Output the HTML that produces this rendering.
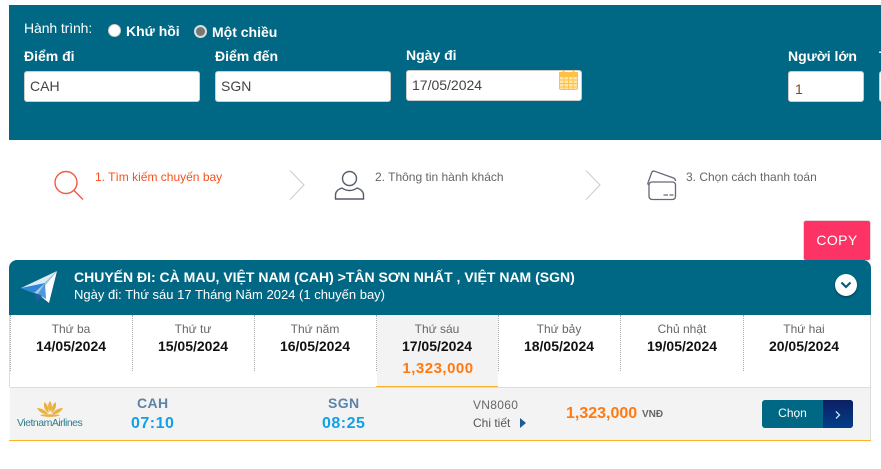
<!DOCTYPE html>
<html lang="vi"><head><meta charset="utf-8"><title>Chuyến bay</title>
<style>
html,body{margin:0;padding:0;background:#fff}
body{position:relative;width:881px;height:469px;overflow:hidden;font-family:"Liberation Sans",Arial,sans-serif;font-size:14px;color:#333}
.a{position:absolute;white-space:nowrap;line-height:16px}
.b{font-weight:bold}
.w{color:#fff}
.lbl{font-weight:bold;color:#fff;font-size:14px}
.inp{position:absolute;background:#fff;border:1px solid #ccc;border-radius:3px;box-sizing:border-box;height:31px;font-size:14px;line-height:29px;padding-left:5px;color:#444}
.sep{position:absolute;top:315px;height:56px;border-left:1px dotted #aaa}
.day{position:absolute;width:122px;text-align:center;line-height:16px;white-space:nowrap}
.d1{top:321px;font-size:12px;color:#666}
.d2{top:338px;font-size:14px;font-weight:bold;color:#111}
.st{position:absolute;font-size:12px;line-height:14px;white-space:nowrap;color:#666}
</style></head><body>
<div class="a" style="left:9px;top:5px;width:872px;height:135px;background:#006884"></div>
<div class="a w" style="left:24px;top:20px;font-size:14px;letter-spacing:-.1px">Hành trình:</div>
<div class="a" style="left:108px;top:24px;width:13px;height:13px;border-radius:50%;background:#fff;border:1px solid #ccc;box-sizing:border-box"></div>
<div class="a lbl" style="left:126px;top:23px">Khứ hồi</div>
<div class="a" style="left:194px;top:25px;width:13px;height:13px;border-radius:50%;background:#777;border:2px solid #ddd;box-sizing:border-box"></div>
<div class="a lbl" style="left:212px;top:24px">Một chiều</div>
<div class="a lbl" style="left:24px;top:48px">Điểm đi</div>
<div class="a lbl" style="left:215px;top:48px">Điểm đến</div>
<div class="a lbl" style="left:406px;top:47px">Ngày đi</div>
<div class="a lbl" style="left:788px;top:48px">Người lớn</div>
<div class="inp" style="left:24px;top:71px;width:176px">CAH</div>
<div class="inp" style="left:215px;top:71px;width:176px">SGN</div>
<div class="inp" style="left:406px;top:70px;width:176px">17/05/2024</div>
<svg class="a" style="left:558px;top:69px" width="21" height="22" viewBox="0 0 21 22">
<rect x="1.500" y="3.500" width="18" height="17" rx="1.500" fill="#ffe6ad" stroke="#fdc048" stroke-width="1"/>
<rect x="1" y="3" width="19" height="5" fill="#fdc048"/>
<path d="M1.500 11h18M1.500 14.500h18M1.500 18h18M6 8v13M10.500 8v13M15 8v13" stroke="#fdc048" stroke-width="1"/>
<path d="M5.500 1v4M15.500 1v4" stroke="#fdc048" stroke-width="2"/>
</svg>
<div class="inp" style="left:788px;top:71px;width:76px;padding-left:6px;line-height:35px;color:#7a4a20">1</div>
<div class="inp" style="left:879px;top:71px;width:10px"></div>
<div class="a lbl" style="left:879px;top:48px">T</div>

<svg class="a" style="left:53px;top:170px" width="32" height="31" viewBox="0 0 32 31" fill="none" stroke="#ef5b45" stroke-width="1.400">
<circle cx="13" cy="12.500" r="11"/><path d="M21 20.500L30 29.500"/></svg>
<div class="st" style="left:95px;top:170px;color:#f4511e">1. Tìm kiếm chuyến bay</div>
<svg class="a" style="left:289px;top:170px" width="16" height="31" viewBox="0 0 16 31" fill="none" stroke="#ccc" stroke-width="1"><path d="M1 .5L15 15L1 29.500"/></svg>
<svg class="a" style="left:334px;top:170px" width="31" height="31" viewBox="0 0 31 31" fill="none" stroke="#565b6b" stroke-width="1.400">
<circle cx="15.500" cy="8.500" r="7"/><path d="M1.500 29V25c0-3 2-5.500 6.500-7 2 1.500 4.500 2.500 7.500 2.500s5.500-1 7.500-2.500c4.500 1.500 6.500 4 6.500 7v4z"/></svg>
<div class="st" style="left:375px;top:170px">2. Thông tin hành khách</div>
<svg class="a" style="left:585px;top:170px" width="16" height="31" viewBox="0 0 16 31" fill="none" stroke="#ccc" stroke-width="1"><path d="M1 .5L15 15L1 29.500"/></svg>
<svg class="a" style="left:647px;top:170px" width="31" height="31" viewBox="0 0 31 31" fill="none" stroke="#64677a" stroke-width="1.300">
<rect x="2" y="12" width="26.500" height="17.500" rx="3"/><path d="M1.500 15L.8 13.500 4.500 3c.5-1.500 1.500-2.200 3-1.800L26.500 8c1.200.5 2 1.200 2 3"/><path d="M16.500 25h4.500M22.500 25h4"/></svg>
<div class="st" style="left:686px;top:170px">3. Chọn cách thanh toán</div>

<div class="a" style="left:803px;top:220px;width:66px;height:39px;background:#fd3366;border:1px solid #e8d5da;border-radius:3px;color:#fff;font-size:14px;line-height:39px;text-align:center;letter-spacing:.4px">COPY</div>

<div class="a" style="left:9px;top:260px;width:862px;height:55px;background:#006884;border-radius:8px 8px 0 0"></div>
<svg class="a" style="left:20px;top:270px" width="40" height="35" viewBox="0 0 40 35">
<path d="M37 1L1 18l13 5z" fill="#dcecf5"/>
<path d="M37 1L29 33 18 24z" fill="#fff"/>
<path d="M37 1L14 23l4 1z" fill="#a8c8dc"/>
<path d="M1 18L25 13 14 23z" fill="#2f86d8"/>
<path d="M25 13L18 24l8 5z" fill="#4a9ae0"/>
<path d="M14 23l3 9 5-6-4-2z" fill="#1f5f9e"/>
</svg>
<div class="a b w" style="left:74px;top:269px;font-size:14px">CHUYẾN ĐI: CÀ MAU, VIỆT NAM (CAH) &gt;TÂN SƠN NHẤT , VIỆT NAM (SGN)</div>
<div class="a w" style="left:74px;top:287px;font-size:13px">Ngày đi: Thứ sáu 17 Tháng Năm 2024 (1 chuyến bay)</div>
<div class="a" style="left:835px;top:274px;width:22px;height:22px;border-radius:50%;background:#fff;box-shadow:0 1px 2px #003a4a"></div>
<svg class="a" style="left:840px;top:281px" width="12" height="8" viewBox="0 0 12 8" fill="none" stroke="#0a5a78" stroke-width="2.200"><path d="M1.500 1.500L6 6l4.500-4.500"/></svg>

<div class="a" style="left:9px;top:315px;width:1px;height:72px;background:#ddd"></div>
<div class="a" style="left:870px;top:315px;width:1px;height:126px;background:#ddd"></div>
<div class="a" style="left:377px;top:315px;width:121px;height:71px;background:#f3f3f3"></div>
<div class="sep" style="left:10px"></div><div class="sep" style="left:132px"></div><div class="sep" style="left:254px"></div><div class="sep" style="left:376px"></div><div class="sep" style="left:620px"></div><div class="sep" style="left:743px"></div><div class="sep" style="left:498px"></div>
<div class="a" style="left:376px;top:386px;width:122px;height:1px;background:#fbb42a"></div>

<div class="day d1" style="left:10px">Thứ ba</div><div class="day d2" style="left:10px">14/05/2024</div>
<div class="day d1" style="left:132px">Thứ tư</div><div class="day d2" style="left:132px">15/05/2024</div>
<div class="day d1" style="left:254px">Thứ năm</div><div class="day d2" style="left:254px">16/05/2024</div>
<div class="day d1" style="left:376px">Thứ sáu</div><div class="day d2" style="left:376px">17/05/2024</div>
<div class="day" style="left:377px;top:361px;font-size:15px;font-weight:bold;color:#ff7a12;letter-spacing:.5px">1,323,000</div>
<div class="day d1" style="left:498px">Thứ bảy</div><div class="day d2" style="left:498px">18/05/2024</div>
<div class="day d1" style="left:621px">Chủ nhật</div><div class="day d2" style="left:621px">19/05/2024</div>
<div class="day d1" style="left:743px">Thứ hai</div><div class="day d2" style="left:743px">20/05/2024</div>

<div class="a" style="left:10px;top:387px;width:860px;height:54px;background:#f3f3f3;border-top:1px solid #ddd;box-sizing:border-box"></div>
<div class="a" style="left:9px;top:440px;width:862px;height:1px;background:#fbb42a"></div>
<svg class="a" style="left:36px;top:400px" width="28" height="18" viewBox="0 0 28 18" fill="#e9b13f">
<path d="M14 1c-2.500 3-2.500 7 0 11 2.500-4 2.500-8 0-11zM8.500 2c-1.500 4 0 8 4 11 .5-4-.5-8-4-11zM19.500 2c1.500 4 0 8-4 11-.5-4 .5-8 4-11zM1 8c2 4 6 6.500 11 6-2-3.500-6.500-6-11-6zM27 8c-2 4-6 6.500-11 6 2-3.500 6.500-6 11-6zM4 15c3 2.500 17 2.500 20 0-4-1-16-1-20 0z"/></svg>
<div class="a" style="left:17px;top:417px;font-size:10.500px;color:#2f7c8e;letter-spacing:-.5px;line-height:12px">VietnamAirlines</div>
<div class="a b" style="left:137px;top:395px;font-size:14px;color:#5b84a8;letter-spacing:.4px">CAH</div>
<div class="a b" style="left:131px;top:416px;font-size:16px;color:#12a0e6;letter-spacing:.5px">07:10</div>
<div class="a b" style="left:328px;top:395px;font-size:14px;color:#5b84a8;letter-spacing:.4px">SGN</div>
<div class="a b" style="left:322px;top:416px;font-size:16px;color:#12a0e6;letter-spacing:.5px">08:25</div>
<div class="a" style="left:473px;top:397px;font-size:12px;color:#666;letter-spacing:.3px">VN8060</div>
<div class="a" style="left:473px;top:415px;font-size:12px;color:#555">Chi tiết</div>
<div class="a" style="left:520px;top:418px;width:0;height:0;border-left:6px solid #1f5a98;border-top:5px solid transparent;border-bottom:5px solid transparent"></div>
<div class="a b" style="left:566px;top:406px;font-size:16px;color:#ff7a12">1,323,000</div>
<div class="a b" style="left:642px;top:409px;font-size:10px;color:#666;line-height:12px">VNĐ</div>
<div class="a" style="left:762px;top:400px;width:91px;height:28px;border-radius:3px;background:#006884;overflow:hidden">
<div style="position:absolute;left:61px;top:0;width:30px;height:28px;background:linear-gradient(#0d1f63,#003f88)"></div>
<div style="position:absolute;left:0;top:0;width:61px;text-align:center;color:#fff;font-size:12px;line-height:26px">Chọn</div>
<svg style="position:absolute;left:73px;top:11px" width="6" height="8" viewBox="0 0 6 8" fill="none" stroke="#cfe0f0" stroke-width="1.300"><path d="M1 .5L4.500 4 1 7.500"/></svg>
</div>
</body></html>
